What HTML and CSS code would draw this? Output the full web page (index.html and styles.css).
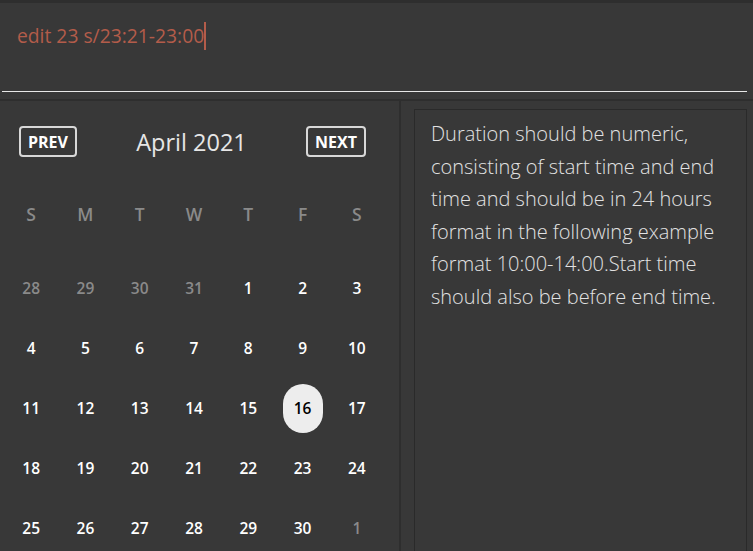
FILE: index.html
```html
<!DOCTYPE html>
<html>
<head>
<meta charset="utf-8">
<link rel="stylesheet" href="styles.css">
</head>
<body>
<div class="app">
  <div class="top-strip"></div>
  <div class="command">
    <div class="cmd-text">edit 23 s/23:21-23:00<span class="caret"></span></div>
  </div>
  <div class="underline"></div>
  <div class="gap"></div>
  <div class="main">
    <div class="calendar">
      <div class="cal-header">
        <button class="nav">PREV</button>
        <div class="month">April 2021</div>
        <button class="nav">NEXT</button>
      </div>
      <div class="grid dows">
        <div class="dow">S</div><div class="dow">M</div><div class="dow">T</div><div class="dow">W</div><div class="dow">T</div><div class="dow">F</div><div class="dow">S</div>
      </div>
      <div class="grid days">
        <div class="day muted">28</div><div class="day muted">29</div><div class="day muted">30</div><div class="day muted">31</div><div class="day">1</div><div class="day">2</div><div class="day">3</div>
        <div class="day">4</div><div class="day">5</div><div class="day">6</div><div class="day">7</div><div class="day">8</div><div class="day">9</div><div class="day">10</div>
        <div class="day">11</div><div class="day">12</div><div class="day">13</div><div class="day">14</div><div class="day">15</div><div class="day"><span class="today">16</span></div><div class="day">17</div>
        <div class="day">18</div><div class="day">19</div><div class="day">20</div><div class="day">21</div><div class="day">22</div><div class="day">23</div><div class="day">24</div>
        <div class="day">25</div><div class="day">26</div><div class="day">27</div><div class="day">28</div><div class="day">29</div><div class="day">30</div><div class="day muted">1</div>
      </div>
    </div>
    <div class="result-wrap">
      <div class="result">Duration should be numeric, consisting of start time and end time and should be in 24 hours format in the following example format 10:00-14:00.Start time should also be before end time.</div>
    </div>
  </div>
</div>
</body>
</html>
```
FILE: styles.css
```css
html, body {
  margin: 0;
  padding: 0;
  background: #383838;
  height: 100%;
  overflow: hidden;
}
.app {
  width: 753px;
  height: 551px;
  display: flex;
  flex-direction: column;
  font-family: "Open Sans", "Noto Sans", sans-serif;
}
.top-strip {
  height: 3px;
  background: #2e2e2e;
}
.command {
  height: 88px;
  box-sizing: border-box;
  padding: 18px 0 0 17px;
}
.cmd-text {
  font-size: 19.3px;
  line-height: 30px;
  color: #b35c4a;
  display: flex;
  align-items: center;
}
.caret {
  display: inline-block;
  width: 2px;
  height: 28px;
  background: #b35c4a;
  margin-left: 0;
}
.underline {
  height: 1px;
  margin: 0 6px 0 2px;
  background: #e8e8e8;
}
.gap {
  height: 7px;
  border-bottom: 2px solid #2e2e2e;
}
.main {
  flex: 1;
  display: flex;
  min-height: 0;
}
.calendar {
  width: 401px;
  border-right: 2px solid #2e2e2e;
  box-sizing: border-box;
  flex: none;
}
.cal-header {
  display: flex;
  justify-content: space-between;
  align-items: center;
  padding: 24px 33px 0 19px;
}
.nav {
  font-family: "Open Sans", "Noto Sans", sans-serif;
  font-weight: 700;
  font-size: 16px;
  color: #ffffff;
  background: transparent;
  border: 2px solid #d8d8d8;
  border-radius: 4px;
  height: 31px;
  padding: 0 7px;
  line-height: 26px;
}
.month {
  font-size: 23.5px;
  color: #e6e6e6;
  margin-top: 1px;
}
.grid {
  margin-left: 4px;
  width: 380px;
  display: grid;
  grid-template-columns: repeat(7, 1fr);
}
.dows {
  margin-top: 26px;
  grid-template-rows: 60px;
}
.days {
  margin-top: 14px;
  grid-template-rows: repeat(5, 60px);
}
.dow {
  display: flex;
  align-items: center;
  justify-content: center;
  font-size: 17.5px;
  font-weight: 600;
  color: #8a8a8a;
}
.day {
  display: flex;
  align-items: center;
  justify-content: center;
  font-size: 15.5px;
  font-weight: 600;
  color: #ffffff;
}
.day.muted {
  color: #8a8a8a;
}
.today {
  width: 40px;
  height: 49px;
  border-radius: 20px;
  background: #ededed;
  color: #000;
  display: flex;
  align-items: center;
  justify-content: center;
}
.result-wrap {
  flex: 1;
  padding: 8px 6px 0 13px;
  display: flex;
}
.result {
  flex: 1;
  border: 1px solid #2a2a2a;
  border-bottom: none;
  padding: 8px 20px 0 16px;
  font-size: 20px;
  font-weight: 300;
  line-height: 32.6px;
  color: #e2e2e2;
}
```
